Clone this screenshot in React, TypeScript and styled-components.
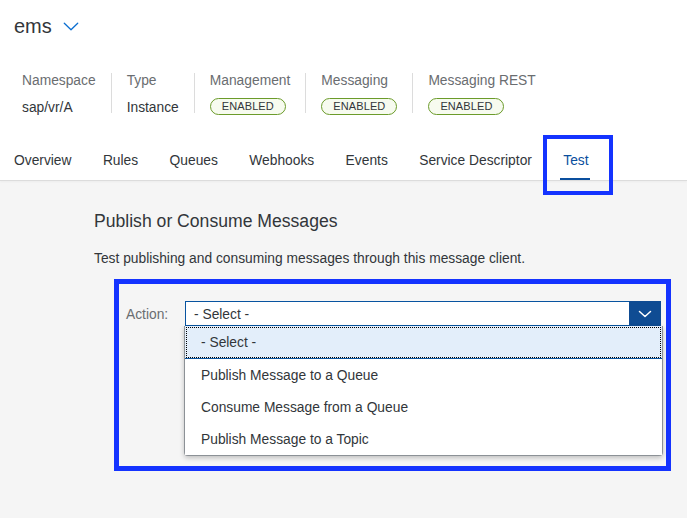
import React from "react";
import styled, { createGlobalStyle } from "styled-components";

const GlobalStyle = createGlobalStyle`
  html, body { margin: 0; padding: 0; }
  body {
    font-family: "Liberation Sans", Arial, sans-serif;
    background: #f5f5f5;
    color: #32363a;
  }
  #root { min-height: 518px; }
`;

const Page = styled.div`
  width: 687px;
  height: 518px;
  overflow: hidden;
  background: #f5f5f5;
`;

const Header = styled.header`
  background: #fff;
  box-shadow: 0 1px 0 #dcdcdc, 0 2px 2px rgba(0, 0, 0, 0.04);
  position: relative;
  z-index: 1;
`;

const TitleRow = styled.div`
  display: flex;
  align-items: center;
  gap: 11px;
  padding: 14px 0 0 14px;
  height: 24px;
`;

const Title = styled.h1`
  margin: 0;
  font-size: 20px;
  line-height: 24px;
  font-weight: 400;
  color: #32363a;
`;

const InfoBar = styled.div`
  display: flex;
  margin-top: 35px;
  padding-left: 22px;
`;

const InfoCol = styled.div<{ $first?: boolean }>`
  display: flex;
  flex-direction: column;
  gap: 11px;
  padding: 0 15px;
  padding-left: ${(p) => (p.$first ? "0" : "15px")};
  border-left: ${(p) => (p.$first ? "none" : "1px solid #dcdcdc")};
  height: 40px;
`;

const InfoLabel = styled.div`
  font-size: 13.8px;
  line-height: 16px;
  color: #6a6d70;
`;

const InfoValue = styled.div`
  font-size: 13.8px;
  line-height: 16px;
  color: #32363a;
`;

const Badge = styled.span`
  display: inline-flex;
  align-items: center;
  align-self: flex-start;
  height: 15px;
  margin-top: -2px;
  padding: 0 11px;
  border: 1px solid #6b9b2a;
  border-radius: 9px;
  background: #f7fbef;
  font-size: 11px;
  line-height: 15px;
  color: #32363a;
  letter-spacing: 0.1px;
`;

const Tabs = styled.nav`
  display: flex;
  gap: 31.4px;
  padding-left: 14px;
  margin-top: 27px;
  height: 40px;
`;

const Tab = styled.div<{ $active?: boolean }>`
  position: relative;
  display: flex;
  align-items: center;
  font-size: 13.8px;
  color: ${(p) => (p.$active ? "#0a4f9e" : "#32363a")};

  &::after {
    content: "";
    display: ${(p) => (p.$active ? "block" : "none")};
    position: absolute;
    left: -3px;
    right: -1px;
    bottom: 0;
    height: 2px;
    background: #0a4f9e;
  }

  &::before {
    content: "";
    display: ${(p) => (p.$active ? "block" : "none")};
    position: absolute;
    left: -20px;
    right: -24px;
    top: -5px;
    bottom: -15px;
    border: 4px solid #1433ff;
    z-index: 2;
  }
`;

const Body = styled.main`
  padding: 29px 16px 0 94px;
`;

const Heading = styled.h2`
  margin: 0;
  font-size: 17.6px;
  line-height: 24px;
  font-weight: 400;
  color: #32363a;
`;

const Description = styled.p`
  margin: 17px 0 0;
  font-size: 13.8px;
  line-height: 18px;
  color: #32363a;
`;

const Panel = styled.section`
  box-sizing: border-box;
  margin: 11px 0 0 20px;
  height: 192px;
  border: 5px solid #1433ff;
  padding: 17px 5px 0 7px;
`;

const FieldRow = styled.div`
  display: flex;
  align-items: center;
`;

const FieldLabel = styled.label`
  width: 59px;
  font-size: 13.8px;
  color: #6a6d70;
  padding-top: 1px;
`;

const SelectWrap = styled.div`
  position: relative;
  flex: 1;
`;

const SelectBox = styled.div`
  box-sizing: border-box;
  display: flex;
  height: 25px;
  border: 1px solid #0854a0;
  background: #fff;
`;

const SelectValue = styled.div`
  flex: 1;
  padding: 1px 0 0 8px;
  font-size: 13.8px;
  line-height: 23px;
  color: #32363a;
`;

const SelectButton = styled.div`
  width: 32px;
  margin: -1px -1px -1px 0;
  background: #0f4c93;
  display: flex;
  align-items: center;
  justify-content: center;
`;

const ListBox = styled.ul`
  position: absolute;
  top: 25px;
  left: -1px;
  right: -2px;
  margin: 0;
  padding: 0;
  list-style: none;
  background: #fff;
  border: 1px solid #8c9196;
  border-top: none;
  border-radius: 0 0 4px 4px;
  box-shadow: 0 2px 5px rgba(0, 0, 0, 0.22);
  z-index: 3;
`;

const Option = styled.li<{ $selected?: boolean }>`
  box-sizing: border-box;
  height: ${(p) => (p.$selected ? "33px" : "32px")};
  padding-left: 16px;
  display: flex;
  align-items: center;
  font-size: 13.8px;
  color: #32363a;
  background: ${(p) => (p.$selected ? "#e3eefa" : "#fff")};
  outline: ${(p) => (p.$selected ? "1px dotted #000" : "none")};
  outline-offset: -2px;
  border-bottom: ${(p) => (p.$selected ? "1px solid #0854a0" : "none")};
`;

const Chevron = ({ color, w, h, sw }: { color: string; w: number; h: number; sw: number }) => (
  <svg width={w} height={h} viewBox={`0 0 ${w} ${h}`} fill="none">
    <polyline
      points={`${sw},${sw} ${w / 2},${h - sw} ${w - sw},${sw}`}
      stroke={color}
      strokeWidth={sw}
      strokeLinecap="round"
      strokeLinejoin="round"
    />
  </svg>
);

const info = [
  { label: "Namespace", value: "sap/vr/A" },
  { label: "Type", value: "Instance" },
  { label: "Management", badge: "ENABLED" },
  { label: "Messaging", badge: "ENABLED" },
  { label: "Messaging REST", badge: "ENABLED" },
];

const tabs = ["Overview", "Rules", "Queues", "Webhooks", "Events", "Service Descriptor", "Test"];

const options = [
  "- Select -",
  "Publish Message to a Queue",
  "Consume Message from a Queue",
  "Publish Message to a Topic",
];

export default function App() {
  return (
    <Page>
      <GlobalStyle />
      <Header>
        <TitleRow>
          <Title>ems</Title>
          <Chevron color="#0a6ed1" w={16} h={9} sw={1.3} />
        </TitleRow>
        <InfoBar>
          {info.map((it, i) => (
            <InfoCol key={it.label} $first={i === 0}>
              <InfoLabel>{it.label}</InfoLabel>
              {it.badge ? <Badge>{it.badge}</Badge> : <InfoValue>{it.value}</InfoValue>}
            </InfoCol>
          ))}
        </InfoBar>
        <Tabs>
          {tabs.map((t) => (
            <Tab key={t} $active={t === "Test"}>
              {t}
            </Tab>
          ))}
        </Tabs>
      </Header>
      <Body>
        <Heading>Publish or Consume Messages</Heading>
        <Description>Test publishing and consuming messages through this message client.</Description>
        <Panel>
          <FieldRow>
            <FieldLabel>Action:</FieldLabel>
            <SelectWrap>
              <SelectBox>
                <SelectValue>- Select -</SelectValue>
                <SelectButton>
                  <Chevron color="#ffffff" w={14} h={8} sw={1.5} />
                </SelectButton>
              </SelectBox>
              <ListBox>
                {options.map((o, i) => (
                  <Option key={o} $selected={i === 0}>
                    {o}
                  </Option>
                ))}
              </ListBox>
            </SelectWrap>
          </FieldRow>
        </Panel>
      </Body>
    </Page>
  );
}
